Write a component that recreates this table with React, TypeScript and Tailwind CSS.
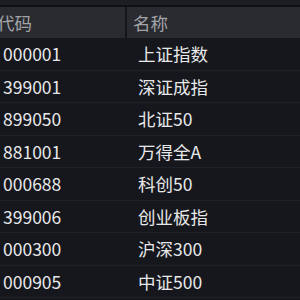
import React from 'react';

const ROWS: [string, string][] = [
  ['000001', '上证指数'],
  ['399001', '深证成指'],
  ['899050', '北证50'],
  ['881001', '万得全A'],
  ['000688', '科创50'],
  ['399006', '创业板指'],
  ['000300', '沪深300'],
  ['000905', '中证500'],
];

const App: React.FC = () => {
  return (
    <div
      className="w-[300px] h-[300px] overflow-hidden bg-[#15171c] text-[17.5px] leading-none"
      style={{ fontFamily: '"Noto Sans CJK SC", "Noto Sans", sans-serif' }}
    >
      <div className="h-[5px] bg-[#1c1e23]" />
      <div className="h-[2px] bg-[#0f1013]" />
      {/* header */}
      <div className="flex h-[31px] bg-[#2a2b30] text-[#a3a4a8]">
        <div className="w-[127px] flex items-center border-r-2 border-[#141518]">
          <span className="-ml-[3px]">代码</span>
        </div>
        <div className="flex-1 flex items-center pl-[6px]">名称</div>
      </div>
      {/* rows */}
      {ROWS.map(([code, name]) => (
        <div key={code} className="flex h-[32.5px] items-center border-b border-[#1f2127] text-[#e8e8ea]">
          <div className="w-[129px] pl-[3px]">{code}</div>
          <div className="flex-1 pl-[9px]">{name}</div>
        </div>
      ))}
    </div>
  );
};

export default App;
